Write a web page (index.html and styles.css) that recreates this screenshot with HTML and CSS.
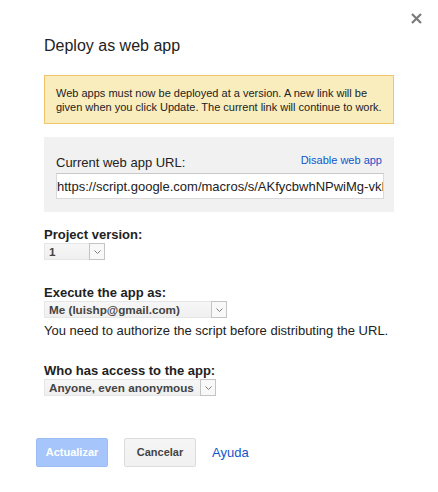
FILE: index.html
```html
<!DOCTYPE html>
<html>
<head>
<meta charset="utf-8">
<link rel="stylesheet" href="styles.css">
</head>
<body>
<div class="dialog">
  <div class="close" aria-label="Close">
    <svg width="11" height="11" viewBox="0 0 11 11"><path d="M1 1 L10 10 M10 1 L1 10" stroke="#7a7a7a" stroke-width="2.2" fill="none"/></svg>
  </div>
  <h1 class="title">Deploy as web app</h1>
  <div class="notice">Web apps must now be deployed at a version. A new link will be given when you click Update. The current link will continue to work.</div>
  <div class="urlbox">
    <div class="urlrow">
      <span class="urllabel">Current web app URL:</span>
      <a class="link small" href="#">Disable web app</a>
    </div>
    <input class="urlfield" type="text" readonly value="https://script.google.com/macros/s/AKfycbwhNPwiMg-vkLx9QzT0/exec">
  </div>

  <div class="field first">
    <div class="flabel">Project version:</div>
    <div class="select sel-version"><span class="sval">1</span><span class="arrow"><svg width="7" height="4" viewBox="0 0 7 4"><path d="M0.5 0.5 L3.5 3.5 L6.5 0.5" stroke="#7d7d7d" stroke-width="1" fill="none"/></svg></span></div>
  </div>

  <div class="field">
    <div class="flabel">Execute the app as:</div>
    <div class="select sel-exec"><span class="sval">Me (luishp@gmail.com)</span><span class="arrow"><svg width="7" height="4" viewBox="0 0 7 4"><path d="M0.5 0.5 L3.5 3.5 L6.5 0.5" stroke="#7d7d7d" stroke-width="1" fill="none"/></svg></span></div>
    <div class="hint">You need to authorize the script before distributing the URL.</div>
  </div>

  <div class="field">
    <div class="flabel">Who has access to the app:</div>
    <div class="select sel-access"><span class="sval">Anyone, even anonymous</span><span class="arrow"><svg width="7" height="4" viewBox="0 0 7 4"><path d="M0.5 0.5 L3.5 3.5 L6.5 0.5" stroke="#7d7d7d" stroke-width="1" fill="none"/></svg></span></div>
  </div>

  <div class="footer">
    <div class="btn btn-primary">Actualizar</div>
    <div class="btn">Cancelar</div>
    <a class="link help" href="#">Ayuda</a>
  </div>
</div>
</body>
</html>
```

FILE: styles.css
```css
html, body {
  margin: 0;
  padding: 0;
  background: #ffffff;
}
body {
  font-family: "Liberation Sans", Arial, sans-serif;
  color: #222222;
  width: 438px;
  height: 492px;
  overflow: hidden;
}
.dialog {
  position: relative;
  padding: 36px 44px 0 44px;
}
.close {
  position: absolute;
  top: 13px;
  right: 16px;
  width: 11px;
  height: 11px;
  line-height: 0;
}
.title {
  margin: 0;
  font-size: 16px;
  line-height: 20px;
  font-weight: normal;
  color: #222222;
}
.notice {
  margin-top: 19px;
  background: #f9edbe;
  border: 1px solid #f0c36d;
  padding: 10px 9px 9px 11px;
  font-size: 11px;
  line-height: 14px;
  color: #222222;
}
.urlbox {
  margin-top: 13px;
  background: #f1f1f1;
  padding: 18px 10px 13px 12px;
}
.urlrow {
  display: flex;
  justify-content: space-between;
  align-items: flex-start;
  height: 16px;
}
.urllabel {
  font-size: 13px;
  line-height: 16px;
}
.link {
  color: #1155cc;
  text-decoration: none;
}
.small {
  font-size: 11px;
  line-height: 11px;
  padding-right: 2px;
}
.urlfield {
  display: block;
  margin: 2px 0 0 0;
  width: 328px;
  height: 26px;
  box-sizing: border-box;
  border: 1px solid #d9d9d9;
  border-top-color: #c8c8c8;
  border-radius: 0;
  background: #ffffff;
  font-family: "Liberation Sans", Arial, sans-serif;
  font-size: 13px;
  padding: 0;
  color: #222222;
  outline: none;
}
.field {
  margin-top: 25px;
}
.field.first {
  margin-top: 15px;
}
.flabel {
  font-size: 13px;
  line-height: 15px;
  font-weight: bold;
  color: #222222;
}
.select {
  margin-top: 1px;
  display: flex;
  align-items: stretch;
  height: 17px;
  box-sizing: border-box;
  background: linear-gradient(#f7f7f7, #efefef);
  border: 1px solid #e6e6e6;
}
.sval {
  flex: 1;
  font-size: 11.7px;
  font-weight: bold;
  line-height: 15px;
  color: #444444;
  padding-left: 4px;
  white-space: nowrap;
  overflow: hidden;
}
.arrow {
  width: 16px;
  box-sizing: border-box;
  border: 1px solid #c4c4c4;
  background: #f8f8f8;
  display: flex;
  align-items: center;
  justify-content: center;
  margin: -1px -1px -1px 0;
}
.sel-version { width: 61px; }
.sel-exec { width: 183px; }
.sel-access { width: 172px; }
.hint {
  margin-top: 5px;
  font-size: 13px;
  line-height: 15px;
  color: #222222;
}
.footer {
  margin-top: 42px;
  margin-left: -8px;
  display: flex;
  align-items: center;
  gap: 16px;
}
.btn {
  box-sizing: border-box;
  width: 72px;
  height: 29px;
  line-height: 27px;
  text-align: center;
  font-size: 11px;
  font-weight: bold;
  color: #444444;
  background: linear-gradient(#f5f5f5, #f1f1f1);
  border: 1px solid #dcdcdc;
  border-radius: 2px;
}
.btn-primary {
  color: #ffffff;
  background: #a6c6fb;
  border-color: #9dbef5;
}
.help {
  font-size: 13px;
  line-height: 15px;
}
```
